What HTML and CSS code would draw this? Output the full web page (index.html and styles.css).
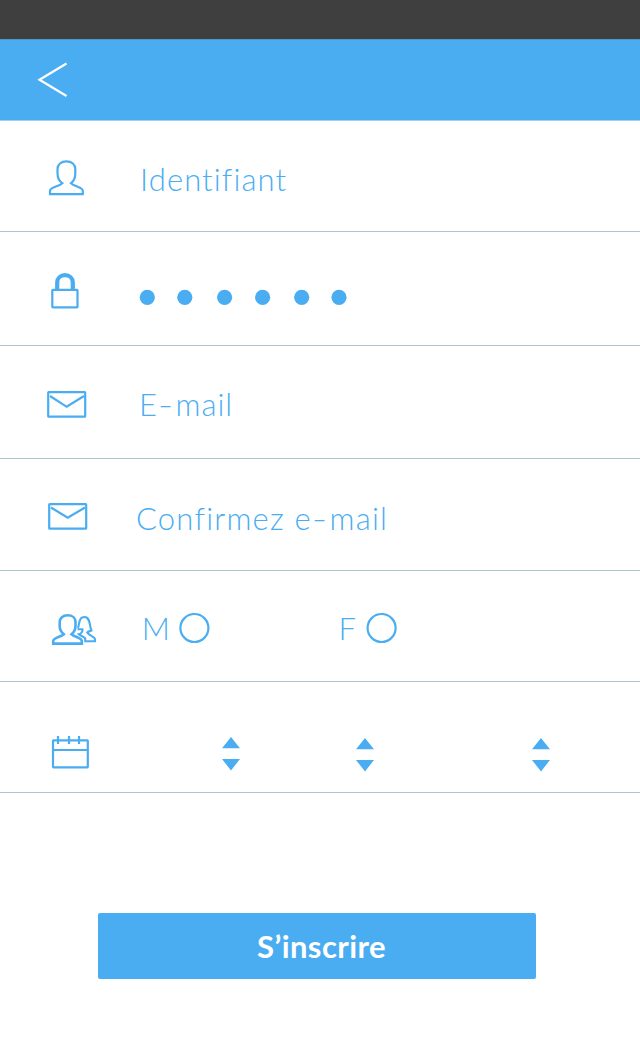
FILE: index.html
```html
<!DOCTYPE html>
<html lang="fr">
<head>
<meta charset="utf-8">
<title>Inscription</title>
<link rel="stylesheet" href="styles.css">
</head>
<body>
<div class="status"></div>
<header class="header">
  <svg class="back" width="34" height="38" viewBox="36 61 34 38"><path d="M66.500 63.500 39.500 79.800 66.500 96"/></svg>
</header>
<form class="form">
  <div class="row row-user">
    <svg class="icon" width="60" height="60" viewBox="40 150 60 60"><path d="M66.400 161.300C61 161.300 57.500 164.500 57.500 169V173C57.500 178 59 181 62.300 183.200C59 186.500 50.200 187.300 50 190.500V194.200H82.800V190.500C82.500 187.300 74.500 186.500 71 183.200C74 181 75.300 178 75.300 173V169C75.300 164.500 71.800 161.300 66.400 161.300Z"/></svg>
    <span class="label label-user">Identifiant</span>
  </div>
  <div class="row row-pass">
    <svg class="icon" width="60" height="60" viewBox="40 260 60 60"><path class="shackle" d="M57.200 290V282.500C57.200 278.200 60.500 275.200 65 275.200S72.800 278.200 72.800 282.500V290"/><rect x="52.300" y="289.900" width="25.200" height="17.400" rx=".5"/></svg>
    <svg class="dots" width="212" height="20" viewBox="138 287 212 20"><circle cx="147.300" cy="297.300" r="7.600"/><circle cx="184.800" cy="297.300" r="7.600"/><circle cx="224.600" cy="297.300" r="7.600"/><circle cx="262.600" cy="297.300" r="7.600"/><circle cx="301.700" cy="297.300" r="7.600"/><circle cx="339" cy="297.300" r="7.600"/></svg>
  </div>
  <div class="row row-mail">
    <svg class="icon" width="60" height="60" viewBox="40 375 60 60"><rect x="48.200" y="392.200" width="37" height="24.500" rx=".5"/><path d="M50 396 66.700 406.800 84 396"/></svg>
    <span class="label label-mail">E<span class="dash">-</span>mail</span>
  </div>
  <div class="row row-confirm">
    <svg class="icon" width="60" height="60" viewBox="40 487 60 60"><rect x="49.200" y="504.200" width="37" height="24.500" rx=".5"/><path d="M51 507.500 67.700 517.800 85 507.500"/></svg>
    <span class="label label-confirm">Confirmez e<span class="dash">-</span>mail</span>
  </div>
  <div class="row row-gender">
    <svg class="icon" width="60" height="60" viewBox="40 600 60 60"><path class="man" d="M67.600 615.300C62.800 615.300 59.700 618 59.700 622V626C59.700 630 61 632 63.800 634.300C60.500 637.300 53.400 637.500 53.200 641V643.600H81.800V641C81.500 637.500 75 637.300 71.500 634.300C74.300 632 75.500 630 75.500 626V622C75.500 618 72.500 615.300 67.600 615.300Z"/><path class="woman" d="M77.500 629.300H82.500C83.200 631.800 80.500 634 78.800 634.300C80.500 636.200 84.500 636.700 85.200 638.500V641.300H95V639C94.500 636.500 89.500 636 87.200 632.500C88 631.200 90.500 631.200 91.500 630.500C89.300 627 90.800 617 84.500 617C78.700 617 79.500 624 78 628"/></svg>
    <label class="label choice choice-m"><span class="letter">M</span><svg width="32" height="32"><circle cx="16.400" cy="16" r="14"/></svg></label>
    <label class="label choice choice-f"><span class="letter">F</span><svg width="32" height="32"><circle cx="16.600" cy="16" r="14"/></svg></label>
  </div>
  <div class="row row-date">
    <svg class="icon" width="60" height="60" viewBox="40 723 60 60"><rect x="53" y="740.300" width="34.800" height="27" rx=".5"/><path d="M53 750H88M58 736V744M69 736V744M79 736V744"/></svg>
    <svg class="spin spin-day" width="20" height="34" viewBox="0 0 20 34"><path d="M10 0 19 11.300H1ZM1 22H19L10 33.500Z"/></svg>
    <svg class="spin spin-month" width="20" height="34" viewBox="0 0 20 34"><path d="M10 0 19 11.300H1ZM1 22H19L10 33.500Z"/></svg>
    <svg class="spin spin-year" width="20" height="34" viewBox="0 0 20 34"><path d="M10 0 19 11.300H1ZM1 22H19L10 33.500Z"/></svg>
  </div>
  <button class="submit" type="button"><span class="submit-text">S’inscrire</span></button>
</form>
</body>
</html>
```
FILE: styles.css
```css
* { box-sizing: border-box; }
body { margin: 0; background: #fff; color: #4aadf2; font-family: Lato, "Open Sans", sans-serif; }
svg { display: block; flex: none; fill: none; stroke: #4aadf2; stroke-width: 2.2; }
.status { height: 39px; background: #3f3f3f; }
.header { height: 82px; padding: 21px 36px; background: #4aadf2; border-top: 1px solid #4f95c8; border-bottom: 1px solid #9bd1f8; }
.back { stroke: #fff; }
.row { display: flex; align-items: flex-start; border-bottom: 1px solid #abc8d0; }
.icon { margin-left: 40px; }
.label { font-size: 31px; line-height: 40px; font-weight: 300; white-space: nowrap; }
.dash { display: inline-block; transform: scaleX(1.35); margin: 0 2.5px; }

.row-user { height: 111px; padding-top: 29px; }
.row-user .label { margin: 9px 0 0 40px; letter-spacing: 1.1px; }
.row-pass { height: 114px; padding-top: 28px; }
.shackle { stroke-width: 4.2; }
.dots { margin: 27px 0 0 38px; fill: #4aadf2; stroke: none; }
.row-mail { height: 113px; padding-top: 29px; }
.row-mail .label { margin: 8.500px 0 0 39px; letter-spacing: 1px; }
.row-confirm { height: 112px; padding-top: 28px; }
.row-confirm .label { margin: 10.500px 0 0 36px; letter-spacing: 1.2px; }
.row-gender { height: 111px; padding-top: 29px; }
.man { stroke-width: 2.600; }
.woman { stroke-width: 2.100; }
.choice { display: flex; gap: 8px; }
.choice svg { margin-top: 4px; }
.row-gender .choice { margin-top: 8px; }
.row-gender .choice-m { width: 68px; margin-left: 42px; justify-content: flex-end; }
.row-gender .choice-f { width: 62px; margin-left: 125px; justify-content: flex-end; gap: 9px; }
.row-date { height: 111px; padding-top: 41px; }
.spin { fill: #4aadf2; stroke: none; margin-top: 15px; }
.spin-day { margin-top: 14px; margin-left: 121px; }
.spin-month { margin-left: 114px; }
.spin-year { margin-left: 156px; }
.submit { display: block; width: 438px; height: 66px; margin: 120px 0 0 98px; padding: 0 0 0 9px; border: 0; border-radius: 2px; background: #4aadf2; color: #fff; font: 700 31px/66px Lato, sans-serif; letter-spacing: .4px; text-align: center; }
```
